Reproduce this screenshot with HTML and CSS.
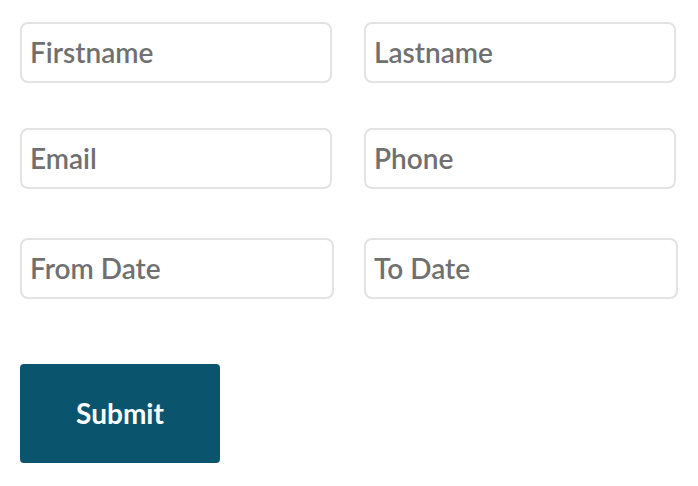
FILE: index.html
```html
<!DOCTYPE html>
<html lang="en">
<head>
<meta charset="utf-8">
<title>Booking form</title>
<link rel="stylesheet" href="styles.css">
</head>
<body>
<form class="form">
  <div class="row row-name">
    <input class="field" type="text" placeholder="Firstname">
    <input class="field" type="text" placeholder="Lastname">
  </div>
  <div class="row row-contact">
    <input class="field" type="email" placeholder="Email">
    <input class="field" type="tel" placeholder="Phone">
  </div>
  <div class="row row-dates">
    <input class="field" type="text" placeholder="From Date">
    <input class="field" type="text" placeholder="To Date">
  </div>
  <button class="submit" type="submit">Submit</button>
</form>
</body>
</html>
```
FILE: styles.css
```css
* { box-sizing: border-box; }
html, body { margin: 0; background: #ffffff; }
body { font-family: "Lato", "Liberation Sans", sans-serif; }

.form {
  padding: 22px 20px 0 20px;
  display: flex;
  flex-direction: column;
  align-items: flex-start;
}

.row {
  display: grid;
  grid-template-columns: 312px 312px;
  column-gap: 32px;
}
.row-name { margin-bottom: 45px; }
.row-contact { margin-bottom: 49px; }
.row-dates {
  grid-template-columns: 314px 314px;
  column-gap: 30px;
  margin-bottom: 65px;
}

.field {
  height: 61px;
  width: 100%;
  margin: 0;
  border: 2px solid #e3e3e3;
  border-radius: 8px;
  padding: 0 8px 2px 8px;
  font-family: inherit;
  font-size: 28px;
  font-weight: 600;
  color: #707070;
  background: #fff;
  outline: none;
}
.field::placeholder { color: #707070; opacity: 1; }

.submit {
  width: 200px;
  height: 99px;
  margin: 0;
  border: 0;
  border-radius: 4px;
  background: #0a546d;
  color: #ffffff;
  font-family: inherit;
  font-size: 28px;
  font-weight: 700;
  padding: 0 0 2px 0;
  cursor: pointer;
}
```
